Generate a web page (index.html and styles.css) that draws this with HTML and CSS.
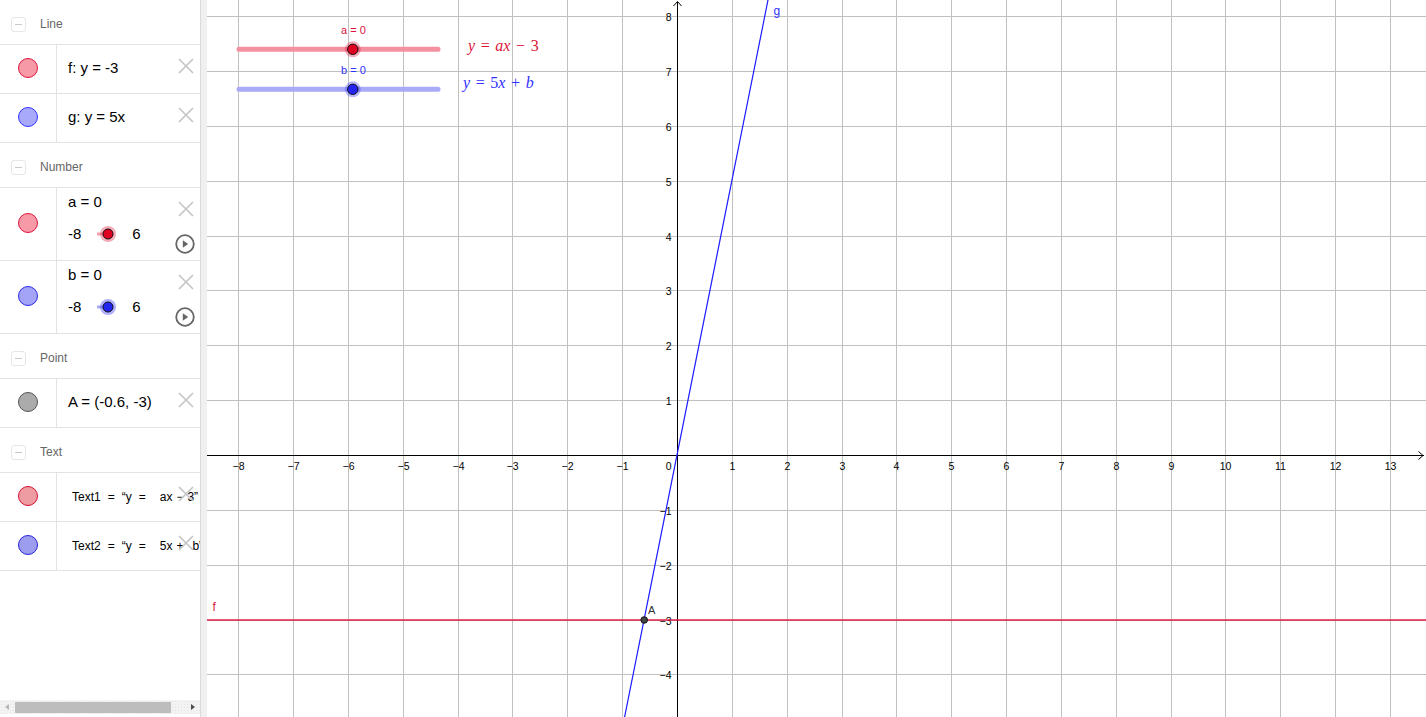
FILE: index.html
```html
<!DOCTYPE html>
<html>
<head>
<meta charset="utf-8">
<title>GeoGebra</title>
<link rel="stylesheet" href="styles.css">
</head>
<body>
<div class="app">
  <aside class="algebra">
    <div class="list">
      <div class="group-head"><span class="collapse"></span><span class="group-title">Line</span></div>
      <div class="item">
        <div class="marble"><span class="dot dot-red"></span></div>
        <div class="content">f: y = -3</div>
        <svg class="del" viewBox="0 0 16 16"><path d="M1 1L15 15M15 1L1 15"/></svg>
      </div>
      <div class="item">
        <div class="marble"><span class="dot dot-blue"></span></div>
        <div class="content">g: y = 5x</div>
        <svg class="del" viewBox="0 0 16 16"><path d="M1 1L15 15M15 1L1 15"/></svg>
      </div>

      <div class="group-head"><span class="collapse"></span><span class="group-title">Number</span></div>
      <div class="item item-num">
        <div class="marble"><span class="dot dot-red"></span></div>
        <div class="num-content">
          <div class="num-line">a = 0</div>
          <div class="num-slider">
            <span>-8</span>
            <svg class="mini-slider" viewBox="0 0 40 20" width="40" height="20">
              <line x1="9" y1="10" x2="16" y2="10" stroke="#f2a0aa" stroke-width="3"/>
              <circle cx="20" cy="10" r="8" fill="#e4304e" fill-opacity="0.4"/>
              <circle cx="20" cy="10" r="5" fill="#e00022" stroke="#111" stroke-width="1"/>
            </svg>
            <span class="max">6</span>
          </div>
        </div>
        <svg class="del" viewBox="0 0 16 16"><path d="M1 1L15 15M15 1L1 15"/></svg>
        <svg class="play" viewBox="0 0 20 20"><circle cx="10" cy="10" r="8.8"/><path d="M7.8 6.3L13.2 10L7.8 13.7Z"/></svg>
      </div>
      <div class="item item-num">
        <div class="marble"><span class="dot dot-blue2"></span></div>
        <div class="num-content">
          <div class="num-line">b = 0</div>
          <div class="num-slider">
            <span>-8</span>
            <svg class="mini-slider" viewBox="0 0 40 20" width="40" height="20">
              <line x1="9" y1="10" x2="16" y2="10" stroke="#a9abe6" stroke-width="3"/>
              <circle cx="20" cy="10" r="8" fill="#3a3aff" fill-opacity="0.4"/>
              <circle cx="20" cy="10" r="5" fill="#2424f0" stroke="#111" stroke-width="1"/>
            </svg>
            <span class="max">6</span>
          </div>
        </div>
        <svg class="del" viewBox="0 0 16 16"><path d="M1 1L15 15M15 1L1 15"/></svg>
        <svg class="play" viewBox="0 0 20 20"><circle cx="10" cy="10" r="8.8"/><path d="M7.8 6.3L13.2 10L7.8 13.7Z"/></svg>
      </div>

      <div class="group-head"><span class="collapse"></span><span class="group-title">Point</span></div>
      <div class="item">
        <div class="marble"><span class="dot dot-gray"></span></div>
        <div class="content">A = (-0.6, -3)</div>
        <svg class="del" viewBox="0 0 16 16"><path d="M1 1L15 15M15 1L1 15"/></svg>
      </div>

      <div class="group-head"><span class="collapse"></span><span class="group-title">Text</span></div>
      <div class="item">
        <div class="marble"><span class="dot dot-red2"></span></div>
        <div class="content content-text"><span>Text1</span><span class="g1">=</span><span class="g1">“y</span><span class="g1">=</span><span class="g2">ax</span><span class="g3">−</span><span class="g3">3”</span></div>
        <svg class="del" viewBox="0 0 16 16"><path d="M1 1L15 15M15 1L1 15"/></svg>
      </div>
      <div class="item">
        <div class="marble"><span class="dot dot-blue3"></span></div>
        <div class="content content-text"><span>Text2</span><span class="g1">=</span><span class="g1">“y</span><span class="g1">=</span><span class="g2">5x</span><span class="g3">+</span><span class="g4">b”</span></div>
        <svg class="del" viewBox="0 0 16 16"><path d="M1 1L15 15M15 1L1 15"/></svg>
      </div>
    </div>

    <div class="hscroll">
      <span class="arrow-left"></span>
      <span class="thumb"></span>
      <span class="arrow-right"></span>
    </div>
  </aside>

  <div class="splitter"></div>

  <main class="graphics">
    <svg class="plot" width="1219" height="717" viewBox="207 0 1219 717">
      <g stroke="#c0c0c0" stroke-width="1" shape-rendering="crispEdges">
        <line x1="238.5" y1="0" x2="238.5" y2="717"/>
        <line x1="293.5" y1="0" x2="293.5" y2="717"/>
        <line x1="348.5" y1="0" x2="348.5" y2="717"/>
        <line x1="403.5" y1="0" x2="403.5" y2="717"/>
        <line x1="458.5" y1="0" x2="458.5" y2="717"/>
        <line x1="512.5" y1="0" x2="512.5" y2="717"/>
        <line x1="567.5" y1="0" x2="567.5" y2="717"/>
        <line x1="622.5" y1="0" x2="622.5" y2="717"/>
        <line x1="732.5" y1="0" x2="732.5" y2="717"/>
        <line x1="787.5" y1="0" x2="787.5" y2="717"/>
        <line x1="842.5" y1="0" x2="842.5" y2="717"/>
        <line x1="896.5" y1="0" x2="896.5" y2="717"/>
        <line x1="951.5" y1="0" x2="951.5" y2="717"/>
        <line x1="1006.5" y1="0" x2="1006.5" y2="717"/>
        <line x1="1061.5" y1="0" x2="1061.5" y2="717"/>
        <line x1="1116.5" y1="0" x2="1116.5" y2="717"/>
        <line x1="1171.5" y1="0" x2="1171.5" y2="717"/>
        <line x1="1225.5" y1="0" x2="1225.5" y2="717"/>
        <line x1="1280.5" y1="0" x2="1280.5" y2="717"/>
        <line x1="1335.5" y1="0" x2="1335.5" y2="717"/>
        <line x1="1390.5" y1="0" x2="1390.5" y2="717"/>
        <line x1="207" y1="16.5" x2="1426" y2="16.5"/>
        <line x1="207" y1="71.5" x2="1426" y2="71.5"/>
        <line x1="207" y1="126.5" x2="1426" y2="126.5"/>
        <line x1="207" y1="181.5" x2="1426" y2="181.5"/>
        <line x1="207" y1="236.5" x2="1426" y2="236.5"/>
        <line x1="207" y1="290.5" x2="1426" y2="290.5"/>
        <line x1="207" y1="345.5" x2="1426" y2="345.5"/>
        <line x1="207" y1="400.5" x2="1426" y2="400.5"/>
        <line x1="207" y1="510.5" x2="1426" y2="510.5"/>
        <line x1="207" y1="565.5" x2="1426" y2="565.5"/>
        <line x1="207" y1="620.5" x2="1426" y2="620.5"/>
        <line x1="207" y1="674.5" x2="1426" y2="674.5"/>
      </g>

      <g stroke="#000" stroke-width="1" fill="none">
        <line x1="207" y1="455.5" x2="1424" y2="455.5" shape-rendering="crispEdges"/>
        <line x1="677.5" y1="2" x2="677.5" y2="717" shape-rendering="crispEdges"/>
        <polyline points="1418.5,451.5 1423,455.5 1418.5,459.5"/>
        <polyline points="673.5,6 677.5,1.5 681.5,6"/>
      </g>

      <g font-family="Liberation Sans, Arial, sans-serif" font-size="10.5" fill="#000" text-anchor="middle">
        <text x="238.5" y="469.5">−8</text>
        <text x="293.5" y="469.5">−7</text>
        <text x="348.5" y="469.5">−6</text>
        <text x="403.5" y="469.5">−5</text>
        <text x="458.5" y="469.5">−4</text>
        <text x="512.5" y="469.5">−3</text>
        <text x="567.5" y="469.5">−2</text>
        <text x="622.5" y="469.5">−1</text>
        <text x="732.5" y="469.5">1</text>
        <text x="787.5" y="469.5">2</text>
        <text x="842.5" y="469.5">3</text>
        <text x="896.5" y="469.5">4</text>
        <text x="951.5" y="469.5">5</text>
        <text x="1006.5" y="469.5">6</text>
        <text x="1061.5" y="469.5">7</text>
        <text x="1116.5" y="469.5">8</text>
        <text x="1171.5" y="469.5">9</text>
        <text x="1225.5" y="469.5">10</text>
        <text x="1280.5" y="469.5">11</text>
        <text x="1335.5" y="469.5">12</text>
        <text x="1390.5" y="469.5">13</text>
      </g>
      <g font-family="Liberation Sans, Arial, sans-serif" font-size="10.5" fill="#000" text-anchor="end">
        <text x="671.5" y="469.5">0</text>
        <text x="671.5" y="20.5">8</text>
        <text x="671.5" y="75.5">7</text>
        <text x="671.5" y="130.5">6</text>
        <text x="671.5" y="185.5">5</text>
        <text x="671.5" y="240.5">4</text>
        <text x="671.5" y="294.5">3</text>
        <text x="671.5" y="349.5">2</text>
        <text x="671.5" y="404.5">1</text>
        <text x="671.5" y="514.5">−1</text>
        <text x="671.5" y="569.5">−2</text>
        <text x="671.5" y="624.5">−3</text>
        <text x="671.5" y="678.5">−4</text>
      </g>

      <line x1="207" y1="620" x2="1426" y2="620" stroke="#dc143c" stroke-opacity="0.7" stroke-width="2"/>
      <line x1="768" y1="0" x2="624.6" y2="717" stroke="#1a1aff" stroke-width="1.2"/>

      <circle cx="644.2" cy="620" r="3.3" fill="#444" stroke="#111" stroke-width="1"/>
      <text x="648" y="614" font-family="Liberation Sans, Arial, sans-serif" font-size="11" fill="#333">A</text>
      <text x="212.5" y="611" font-family="Liberation Sans, Arial, sans-serif" font-size="12" fill="#dc143c">f</text>
      <text x="773.5" y="15" font-family="Liberation Sans, Arial, sans-serif" font-size="12" fill="#3030ff">g</text>

      <line x1="239" y1="49.3" x2="438" y2="49.3" stroke="#f4909f" stroke-width="5" stroke-linecap="round"/>
      <circle cx="352.8" cy="49.3" r="8" fill="#dc143c" fill-opacity="0.35"/>
      <circle cx="352.8" cy="49.3" r="5.2" fill="#e00022" stroke="#111" stroke-width="1"/>
      <text x="353.5" y="34" text-anchor="middle" font-family="Liberation Sans, Arial, sans-serif" font-size="11" fill="#dc143c">a = 0</text>

      <line x1="239" y1="89.3" x2="438" y2="89.3" stroke="#a9abf6" stroke-width="5" stroke-linecap="round"/>
      <circle cx="352.8" cy="89.3" r="8" fill="#3a3aff" fill-opacity="0.35"/>
      <circle cx="352.8" cy="89.3" r="5.2" fill="#2424f0" stroke="#111" stroke-width="1"/>
      <text x="353.5" y="74" text-anchor="middle" font-family="Liberation Sans, Arial, sans-serif" font-size="11" fill="#3030ff">b = 0</text>

      <text x="468" y="50.5" font-family="Liberation Serif, Times New Roman, serif" font-size="16" word-spacing="1.6" fill="#dc143c"><tspan font-style="italic">y</tspan> = <tspan font-style="italic">ax</tspan> − 3</text>
      <text x="463" y="87.5" font-family="Liberation Serif, Times New Roman, serif" font-size="16" word-spacing="1.6" fill="#3030ff"><tspan font-style="italic">y</tspan> = 5<tspan font-style="italic">x</tspan> + <tspan font-style="italic">b</tspan></text>
    </svg>
  </main>
</div>
</body>
</html>
```

FILE: styles.css
```css
* {
  box-sizing: border-box;
}

html, body {
  margin: 0;
  padding: 0;
  height: 100%;
  overflow: hidden;
  background: #fff;
}

body {
  font-family: "Liberation Sans", Arial, sans-serif;
  color: #000;
}

.app {
  display: flex;
  width: 1426px;
  height: 717px;
}

/* ---------- Algebra view ---------- */
.algebra {
  width: 200px;
  flex: none;
  display: flex;
  flex-direction: column;
  overflow: hidden;
  background: #fff;
}

.list {
  flex: 1;
}

.group-head {
  height: 45px;
  display: flex;
  align-items: center;
  padding: 4px 0 0 11px;
  border-bottom: 1px solid #e3e3e3;
}

.collapse {
  width: 15px;
  height: 15px;
  border: 1px solid #e6e6e6;
  border-radius: 3px;
  position: relative;
  flex: none;
}

.collapse::after {
  content: "";
  position: absolute;
  left: 3px;
  right: 3px;
  top: 6px;
  height: 1.5px;
  background: #c9c9c9;
}

.group-title {
  margin-left: 14px;
  font-size: 12px;
  color: #666;
}

.item {
  position: relative;
  display: flex;
  height: 49px;
  border-bottom: 1px solid #e3e3e3;
}

.item-num {
  height: 73px;
}

.marble {
  width: 57px;
  flex: none;
  display: flex;
  align-items: center;
  justify-content: center;
  padding-bottom: 2px;
  border-right: 1px solid #e3e3e3;
}

.dot {
  width: 20px;
  height: 20px;
  border-radius: 50%;
  border: 1px solid;
}

.dot-red { background: #f799a7; border-color: #dc143c; }
.dot-blue { background: #a9a9fb; border-color: #3333ff; }
.dot-blue2 { background: #a3a3f7; border-color: #2b2be6; }
.dot-gray { background: #ababab; border-color: #555; }
.dot-red2 { background: #ee9ba1; border-color: #d41034; }
.dot-blue3 { background: #9d9def; border-color: #2323d8; }

.content {
  display: flex;
  align-items: center;
  padding: 0 0 3px 11px;
  font-size: 15px;
  white-space: nowrap;
}

.content-text {
  padding: 0 0 1px 15px;
  font-size: 12px;
}

.g1 { margin-left: 7px; }
.g2 { margin-left: 14px; }
.g3 { margin-left: 4px; }
.g4 { margin-left: 9px; }

.num-content {
  display: flex;
  flex-direction: column;
  padding: 5px 0 0 11px;
  font-size: 15px;
}

.num-line {
  height: 18px;
  line-height: 18px;
}

.num-slider {
  margin-top: 10px;
  height: 25px;
  display: flex;
  align-items: center;
}

.mini-slider {
  margin-left: 7px;
  flex: none;
}

.max {
  margin-left: 4px;
}

.del {
  position: absolute;
  top: 13px;
  right: 6px;
  width: 16px;
  height: 16px;
  fill: none;
  stroke: #c6c6c6;
  stroke-width: 1.7;
}

.play {
  position: absolute;
  top: 46px;
  right: 5px;
  width: 20px;
  height: 20px;
}

.play circle {
  fill: none;
  stroke: #666;
  stroke-width: 1.8;
}

.play path {
  fill: #666;
}

/* ---------- horizontal scrollbar ---------- */
.hscroll {
  height: 14px;
  margin-bottom: 3px;
  display: flex;
  align-items: center;
  padding: 0 5px 0 5px;
  background-color: #f3f3f3;
  background-image: radial-gradient(#e4e4e4 0.6px, transparent 0.8px);
  background-size: 3px 3px;
}

.arrow-left {
  width: 0;
  height: 0;
  border-top: 3.5px solid transparent;
  border-bottom: 3.5px solid transparent;
  border-right: 4px solid #b5b5b5;
}

.thumb {
  margin-left: 6px;
  width: 157px;
  height: 11px;
  background: #bdbdbd;
}

.arrow-right {
  margin-left: 20px;
  width: 0;
  height: 0;
  border-top: 3.5px solid transparent;
  border-bottom: 3.5px solid transparent;
  border-left: 4px solid #4d4d4d;
}

/* ---------- splitter ---------- */
.splitter {
  width: 7px;
  flex: none;
  background: #f0f0f0;
  border-left: 1px solid #dadada;
}

/* ---------- graphics view ---------- */
.graphics {
  flex: 1;
  position: relative;
  overflow: hidden;
  background: #fff;
}

.plot {
  display: block;
}
```
